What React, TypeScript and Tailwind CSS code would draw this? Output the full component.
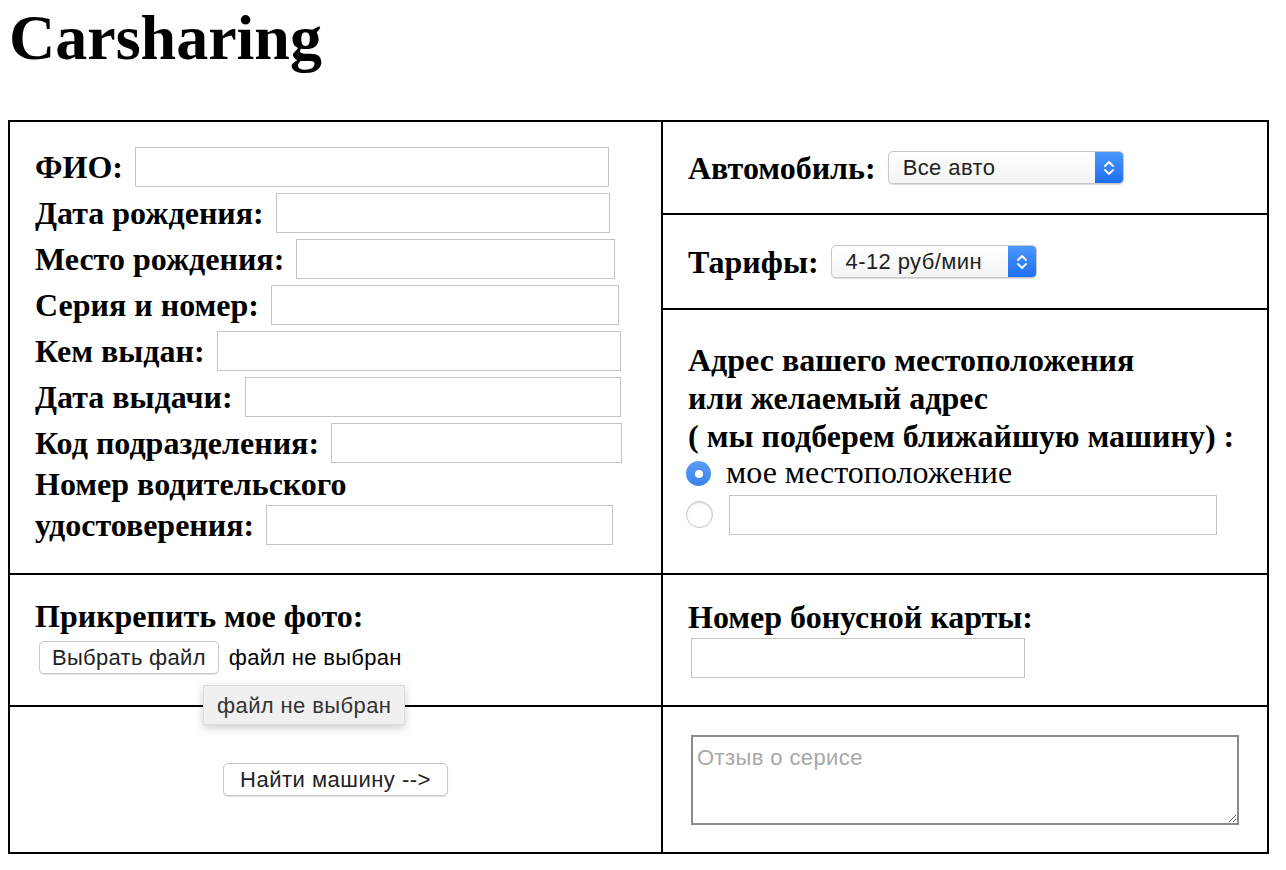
import React from "react"

const serif = { fontFamily: '"Liberation Serif", "Times New Roman", serif' }

function Field({ label, width }: { label: string; width: number }) {
    return (
        <div className="flex items-center h-[46px]">
            <span className="font-bold text-[32px] leading-none whitespace-nowrap">{label}</span>
            <input className="ml-[12px] h-[40px] border border-[#c4c4c4] bg-white outline-none" style={{ width }} />
        </div>
    )
}

function MacSelect({ value, width }: { value: string; width: number }) {
    return (
        <div
            className="ml-[12px] h-[33px] flex items-stretch rounded-[5px] border border-[#c8c8c8] bg-gradient-to-b from-white to-[#f4f4f4] shadow-[0_1px_1px_rgba(0,0,0,0.15)] overflow-hidden"
            style={{ width }}
        >
            <span className="flex-1 flex items-center pl-[14px] text-[22px] tracking-[0.4px] text-[#222] font-['Liberation_Sans',Arial,sans-serif]">{value}</span>
            <span className="w-[28px] flex items-center justify-center bg-gradient-to-b from-[#4a97fb] to-[#1d6ff2]">
                <svg width="14" height="20" viewBox="0 0 14 20" fill="none" stroke="white" strokeWidth="1.8" strokeLinecap="round" strokeLinejoin="round">
                    <path d="M3 8 L7 4 L11 8" />
                    <path d="M3 12 L7 16 L11 12" />
                </svg>
            </span>
        </div>
    )
}

function MacButton({ children, small }: { children: React.ReactNode; small?: boolean }) {
    return (
        <button
            className={
                (small ? "px-[12px] tracking-[0.3px] " : "px-[16px] tracking-[0.5px] ") +
                "h-[33px] rounded-[5px] border border-[#c8c8c8] bg-white shadow-[0_1px_1px_rgba(0,0,0,0.12)] text-[22px] text-[#222] font-['Liberation_Sans',Arial,sans-serif] leading-none whitespace-nowrap"
            }
        >
            {children}
        </button>
    )
}

export default function App() {
    return (
        <div className="bg-white text-black min-h-[870px] px-2" style={serif}>
            <h1 className="text-[64px] font-bold leading-none pt-[6px] pl-[1px] h-[120px]">Carsharing</h1>

            <div className="grid grid-cols-[651px_604px] grid-rows-[91px_93px_263px_130px_145px] gap-[2px] p-[2px] bg-black w-[1261px]">
                {/* личные данные */}
                <div className="row-span-3 bg-white flex flex-col justify-center pl-[25px] pb-[4px]">
                    <Field label="ФИО:" width={474} />
                    <Field label="Дата рождения:" width={334} />
                    <Field label="Место рождения:" width={319} />
                    <Field label="Серия и номер:" width={348} />
                    <Field label="Кем выдан:" width={404} />
                    <Field label="Дата выдачи:" width={376} />
                    <Field label="Код подразделения:" width={291} />
                    <div className="font-bold text-[32px] leading-none h-[36px] flex items-center">Номер водительского</div>
                    <Field label="удостоверения:" width={347} />
                </div>

                {/* автомобиль */}
                <div className="bg-white flex items-center pl-[25px]">
                    <span className="font-bold text-[32px]">Автомобиль:</span>
                    <MacSelect value="Все авто" width={236} />
                </div>

                {/* тарифы */}
                <div className="bg-white flex items-center pl-[25px]">
                    <span className="font-bold text-[32px]">Тарифы:</span>
                    <MacSelect value="4-12 руб/мин" width={206} />
                </div>

                {/* адрес */}
                <div className="bg-white flex flex-col justify-center pl-[25px]">
                    <div className="font-bold text-[32px] leading-[38px] -mt-[6px]">
                        Адрес вашего местоположения
                        <br />
                        или желаемый адрес
                        <br />( мы подберем ближайшую машину) :
                    </div>
                    <div className="flex items-center h-[38px] -ml-[2px]">
                        <span className="w-[25px] h-[25px] rounded-full bg-gradient-to-b from-[#5b9cf8] to-[#3b82f0] flex items-center justify-center">
                            <span className="w-[8px] h-[8px] rounded-full bg-white" />
                        </span>
                        <span className="ml-[15px] text-[32px] leading-none -mt-[4px]">мое местоположение</span>
                    </div>
                    <div className="flex items-center h-[44px] -ml-[2px]">
                        <span className="w-[27px] h-[27px] rounded-full bg-white border border-[#c4c4c4] shadow-[inset_0_1px_2px_rgba(0,0,0,0.15)]" />
                        <input className="ml-[16px] w-[488px] h-[40px] border border-[#c4c4c4] bg-white outline-none" />
                    </div>
                </div>

                {/* фото */}
                <div className="bg-white flex flex-col justify-center pl-[25px] pb-[6px] relative">
                    <div className="font-bold text-[32px] leading-[32px]">Прикрепить мое фото:</div>
                    <div className="flex items-center mt-[9px] ml-[4px]">
                        <MacButton small>Выбрать файл</MacButton>
                        <span className="ml-[10px] text-[22px] tracking-[0.3px] font-['Liberation_Sans',Arial,sans-serif]">файл не выбран</span>
                    </div>
                    <div className="absolute left-[193px] top-[110px] z-10 h-[40px] px-[13px] flex items-center bg-[#f0f0f0] border border-[#dcdcdc] shadow-[0_3px_8px_rgba(0,0,0,0.2)] text-[22px] tracking-[0.4px] text-[#333] font-['Liberation_Sans',Arial,sans-serif] whitespace-nowrap">
                        файл не выбран
                    </div>
                </div>

                {/* бонусная карта */}
                <div className="bg-white flex flex-col justify-center pl-[25px] pb-[2px]">
                    <div className="font-bold text-[32px] leading-[32px]">Номер бонусной карты:</div>
                    <input className="mt-[5px] ml-[3px] w-[334px] h-[40px] border border-[#c4c4c4] bg-white outline-none" />
                </div>

                {/* поиск */}
                <div className="bg-white flex items-center justify-center">
                    <MacButton>Найти машину --&gt;</MacButton>
                </div>

                {/* отзыв */}
                <div className="bg-white flex items-center pl-[28px]">
                    <textarea
                        placeholder="Отзыв о серисе"
                        className="w-[548px] h-[90px] border-2 border-[#8a8a8a] px-[4px] py-[4px] text-[22px] tracking-[0.4px] placeholder:text-[#a8a8a8] font-['Liberation_Sans',Arial,sans-serif] outline-none"
                    />
                </div>
            </div>
        </div>
    )
}
